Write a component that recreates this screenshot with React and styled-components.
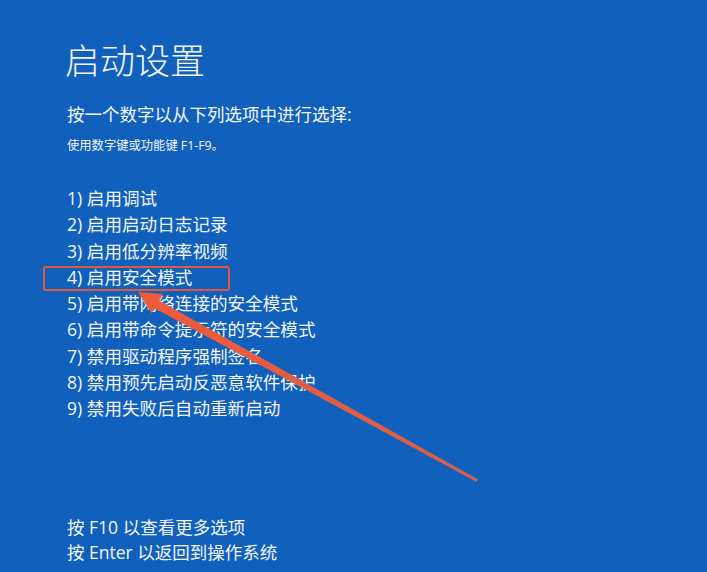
import React from 'react';
import styled, { createGlobalStyle } from 'styled-components';

const GlobalStyle = createGlobalStyle`
    html, body {
        margin: 0;
        padding: 0;
        background: #1160bb;
    }
`;

const Screen = styled.div`
    position: relative;
    box-sizing: border-box;
    display: flex;
    flex-direction: column;
    width: 707px;
    height: 572px;
    padding: 38px 0 7px 67px;
    overflow: hidden;
    background: #1160bb;
    color: #f2f6fc;
    font-family: "Open Sans", "Noto Sans CJK SC", sans-serif;
`;

const Title = styled.h1`
    margin: 0 0 0 -2px;
    font-size: 35px;
    font-weight: 300;
    line-height: 42px;
    font-family: "Noto Sans CJK SC", sans-serif;
`;

const Prompt = styled.div`
    margin-top: 22px;
    font-size: 17.5px;
    line-height: 24px;
`;

const Hint = styled.div`
    margin-top: 11px;
    font-size: 12.3px;
    line-height: 18px;
`;

const OptionList = styled.ol`
    margin: 30px 0 0;
    padding: 0;
    list-style: none;
`;

const Option = styled.li`
    position: relative;
    font-size: 17.6px;
    line-height: 26.25px;

    ${({ $marked }) => $marked && `
        &::before {
            content: '';
            position: absolute;
            left: -24px;
            top: 2px;
            width: 187px;
            height: 25px;
            box-sizing: border-box;
            border: 2px solid #e5573b;
            border-radius: 3px;
        }
    `}
`;

const Footer = styled.div`
    margin-top: auto;
    font-size: 17.5px;
    line-height: 25px;
`;

const Arrow = styled.svg`
    position: absolute;
    left: 0;
    top: 0;
    pointer-events: none;
`;

const options = [
    '启用调试',
    '启用启动日志记录',
    '启用低分辨率视频',
    '启用安全模式',
    '启用带网络连接的安全模式',
    '启用带命令提示符的安全模式',
    '禁用驱动程序强制签名',
    '禁用预先启动反恶意软件保护',
    '禁用失败后自动重新启动',
];

export default function App() {
    return (
        <Screen>
            <GlobalStyle />
            <Title>启动设置</Title>
            <Prompt>按一个数字以从下列选项中进行选择:</Prompt>
            <Hint>使用数字键或功能键 F1-F9。</Hint>
            <OptionList>
                {options.map((label, i) => (
                    <Option key={label} $marked={i === 3}>
                        {i + 1}) {label}
                    </Option>
                ))}
            </OptionList>
            <Footer>
                <div>按 F10 以查看更多选项</div>
                <div>按 Enter 以返回到操作系统</div>
            </Footer>
            {/* annotation arrow pointing at option 4 */}
            <Arrow width="707" height="572" viewBox="0 0 707 572">
                <defs>
                    <linearGradient id="fade" x1="138" y1="292" x2="477" y2="480" gradientUnits="userSpaceOnUse">
                        <stop offset="0" stopColor="#ee5a3a" />
                        <stop offset="1" stopColor="#d9604a" />
                    </linearGradient>
                </defs>
                <polygon
                    fill="url(#fade)"
                    points="138,292 163,294 159.4,300.7 477.7,479.3 476.3,481.7 155,308.5 151.5,313"
                />
            </Arrow>
        </Screen>
    );
}
